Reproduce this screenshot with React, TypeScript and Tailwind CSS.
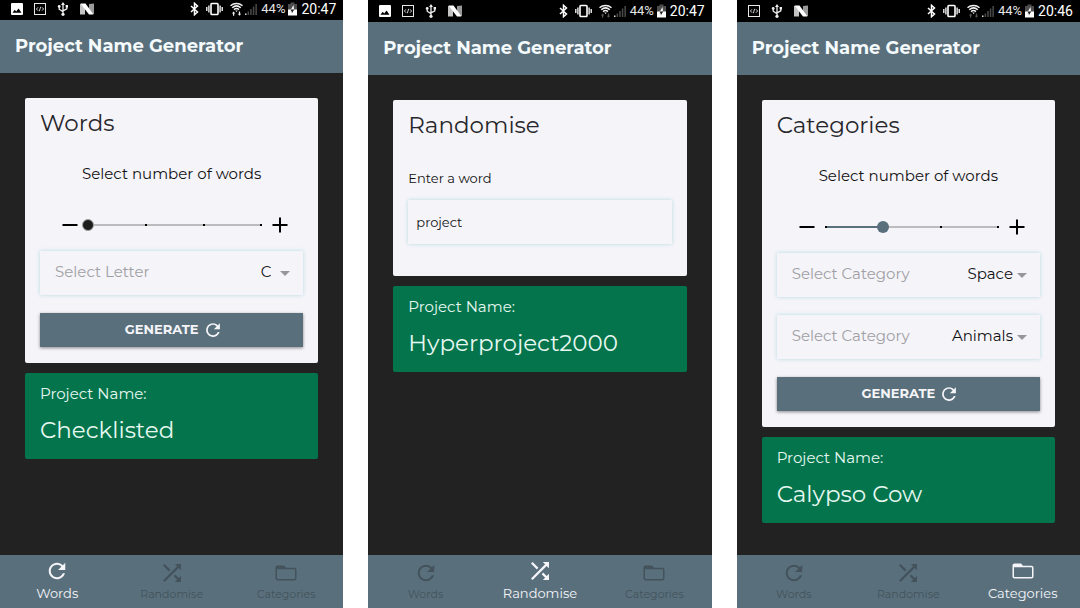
import { useId, useState } from "react";
import type { ReactNode } from "react";
import { IoMdAdd, IoMdFolderOpen, IoMdRefresh, IoMdRemove, IoMdShuffle } from "react-icons/io";
import clsx from "clsx";

type Tab = "Words" | "Randomise" | "Categories";

function ImageIcon() {
  return (
    <svg viewBox="0 0 12 12" className="h-3 w-3" aria-hidden="true">
      <path fill="#fff" fillRule="evenodd" d="M1 0h10a1 1 0 0 1 1 1v10a1 1 0 0 1-1 1H1a1 1 0 0 1-1-1V1a1 1 0 0 1 1-1zM1.500 9.700h9L7.600 5.600 5.200 8.600 3.700 6.800z" />
    </svg>
  );
}

function CodeIcon() {
  return (
    <svg viewBox="0 0 12 12" className="h-3 w-3" fill="none" stroke="#e8e8e8" aria-hidden="true">
      <rect x="0.5" y="0.5" width="11" height="11" />
      <path strokeWidth="0.9" d="M4 4.300 2.400 6 4 7.700M8 4.300 9.600 6 8 7.700M6.700 3.800 5.300 8.200" />
    </svg>
  );
}

function UsbIcon() {
  return (
    <svg viewBox="0 0 12 14" className="h-3.5 w-3" fill="none" stroke="#eee" aria-hidden="true">
      <path strokeWidth="1.3" d="M6 2v10M2.200 5v2.200L6 9.600M9.800 4.800v2L6 8.800" />
      <path fill="#eee" stroke="none" d="M6 0l2 2.900H4zM8.600 3H11v2.400H8.600z" />
      <circle cx="2.200" cy="4.400" r="1.400" fill="#eee" stroke="none" />
      <circle cx="6" cy="12.300" r="1.600" fill="#eee" stroke="none" />
    </svg>
  );
}

function NougatIcon() {
  return (
    <svg viewBox="0 0 14 12" className="h-3 w-3.5" aria-hidden="true">
      <path fill="#c4c4c4" d="M0 1h5v10.500H0z" />
      <path fill="#9a9a9a" d="M9 1l5-.5V11H9z" />
      <path fill="#fff" d="M.5.5H5.500L13.500 11.500H9z" />
    </svg>
  );
}

function BluetoothIcon() {
  return (
    <svg viewBox="0 0 9 14" className="h-3.5 w-[9px]" fill="none" stroke="#fff" strokeWidth="1.500" aria-hidden="true">
      <path d="M1 4l6.500 6L4.500 12.700V1.300L7.500 4 1 10" />
    </svg>
  );
}

function VibrateIcon() {
  return (
    <svg viewBox="0 0 17 14" className="h-3.5 w-[17px]" fill="none" stroke="#fff" aria-hidden="true">
      <rect x="5" y="1.500" width="7" height="11" rx="0.8" strokeWidth="1.600" />
      <path strokeWidth="1.300" d="M2.900 3.500v7M14.100 3.500v7M.8 5v4M16.200 5v4" />
    </svg>
  );
}

function WifiIcon({ active }: { active: boolean }) {
  return (
    <svg viewBox="0 0 13 14" className="h-3.5 w-[13px]" fill="none" stroke="#f2f2f2" aria-hidden="true">
      <path strokeWidth="1.500" d="M.5 3.700C4 .7 9 .7 12.500 3.700M2.200 5.700c2.600-2.200 6-2.200 8.600 0M4 7.600c1.600-1.300 3.400-1.300 5 0" />
      <path fill="#f2f2f2" stroke="none" d="M5.200 8.500h2.600L6.500 10z" />
      <path
        stroke="none"
        fill={active ? "#f2f2f2" : "#555"}
        d="M3.600 9.500 5.300 11.600H4.200V13.800H3V11.600H1.900zM9.500 13.800 7.800 11.700H8.900V9.500H10.100V11.700H11.200z"
      />
    </svg>
  );
}

function SignalIcon() {
  return (
    <svg viewBox="0 0 12 14" className="h-3.5 w-3" aria-hidden="true">
      <path fill="#ddd" d="M0 11.500h1.500V13H0z" />
      <path fill="#4a4a4a" d="M2.600 9.500h1.500V13H2.600zM5.200 7h1.500v6H5.200zM7.800 4.500h1.500V13H7.800zM10.400 2h1.500v11h-1.500z" />
    </svg>
  );
}

function BatteryIcon() {
  return (
    <svg viewBox="0 0 9 14" className="h-3.5 w-[9px]" aria-hidden="true">
      <path fill="#4d4d4d" d="M2.500.5h4V2H9v6H0V2h2.500z" />
      <path fill="#fff" d="M0 7.500h9V13.500H0z" />
      <path fill="#fff" d="M5.500 3 3 7.500h3z" />
      <path fill="#222" d="M3.500 7.500h2.700L3.800 11.500v-2.300H2.600z" />
    </svg>
  );
}

function StatusBar({ time, picture, wifi, tall }: { time: string; picture: boolean; wifi: boolean; tall: boolean }) {
  return (
    <div className={clsx("flex shrink-0 items-center justify-between bg-black pr-[7px] pl-[11px] font-['Roboto',sans-serif] text-white", tall ? "h-[22px]" : "h-5 pb-0.5")}>
      <div className="flex items-center gap-[11px]">
        {picture && <ImageIcon />}
        <CodeIcon />
        <UsbIcon />
        <NougatIcon />
      </div>
      <div className="flex items-center">
        <div className="mr-0.5 flex items-center gap-[7px]">
          <BluetoothIcon />
          <VibrateIcon />
          <WifiIcon active={wifi} />
        </div>
        <SignalIcon />
        <span className="mr-[3px] ml-1 text-[13px] leading-4 text-[#e6e6e6]">44%</span>
        <BatteryIcon />
        <span className="ml-1 text-sm leading-4">{time}</span>
      </div>
    </div>
  );
}

const tabs = [
  { name: "Words", Icon: IoMdRefresh },
  { name: "Randomise", Icon: IoMdShuffle },
  { name: "Categories", Icon: IoMdFolderOpen },
] as const;

function TabBar({ active }: { active: Tab }) {
  return (
    <nav className="grid h-[53px] shrink-0 grid-cols-3 bg-[#59707c]">
      {tabs.map(({ name, Icon }) => {
        const on = name === active;
        return (
          <button
            key={name}
            type="button"
            aria-current={on ? "page" : undefined}
            className={clsx("flex flex-col items-center", on ? "pt-1 text-[13px] leading-5 text-[#f5f4f9]" : "pt-1.5 text-[11px] leading-[18px] text-[#43525b]")}
          >
            <Icon className="size-6" aria-hidden="true" />
            {name}
          </button>
        );
      })}
    </nav>
  );
}

function Slider({ initial }: { initial: number }) {
  const id = useId();
  const [value, setValue] = useState(initial);
  return (
    <>
      <label htmlFor={id} className="mt-6 block text-center text-[15px] leading-6 text-[#111]">
        Select number of words
      </label>
      <div className="mt-6 flex h-[30px] items-center pr-[11px] pl-[18px] text-black">
        <button type="button" aria-label="Fewer words" onClick={() => setValue(Math.max(1, value - 1))}>
          <IoMdRemove className="size-6" />
        </button>
        <div className="relative h-3 min-w-0 flex-1">
          <div className="absolute inset-x-1.5 top-[5px] h-0.5 bg-[#bcbcbf]">
            <div className="h-full bg-[#59707c]" style={{ width: `${((value - 1) / 3) * 100}%` }} />
            <div className="absolute inset-0 flex justify-between">
              {[1, 2, 3, 4].map((n) => (
                <span key={n} className="h-0.5 w-0.5 bg-black" />
              ))}
            </div>
          </div>
          <input
            id={id}
            type="range"
            min={1}
            max={4}
            value={value}
            onChange={(e) => setValue(Number(e.target.value))}
            className={clsx(
              "absolute inset-0 m-0 h-3 w-full appearance-none bg-transparent [&::-webkit-slider-thumb]:size-3 [&::-webkit-slider-thumb]:appearance-none [&::-webkit-slider-thumb]:rounded-full",
              value === 1
                ? "[&::-webkit-slider-thumb]:border [&::-webkit-slider-thumb]:border-[#a0a0a2] [&::-webkit-slider-thumb]:bg-[#1d1d1d]"
                : "[&::-webkit-slider-thumb]:bg-[#59707c]",
            )}
          />
        </div>
        <button type="button" aria-label="More words" onClick={() => setValue(Math.min(4, value + 1))}>
          <IoMdAdd className="size-6" />
        </button>
      </div>
    </>
  );
}

function Picker({ label, options, wide }: { label: string; options: string[]; wide?: boolean }) {
  const id = useId();
  return (
    <div className="flex h-11 items-center pr-[13px] pl-[15px] text-[15px] leading-6 shadow-[0_0_4px_#b4dce0]">
      <label htmlFor={id} className="flex-1 pb-0.5 whitespace-nowrap text-[#a0a0a4]">
        {label}
      </label>
      <select id={id} className={clsx("h-full appearance-none bg-transparent pb-0.5 text-[#111] [text-align-last:right]", wide ? "pr-1" : "pr-[9px]")}>
        {options.map((o) => (
          <option key={o}>{o}</option>
        ))}
      </select>
      <svg viewBox="0 0 10 5" className="h-[5px] w-2.5" aria-hidden="true">
        <path fill="#97979b" d="M0 0h10L5 5z" />
      </svg>
    </div>
  );
}

function GenerateButton() {
  return (
    <button type="button" className="flex h-[34px] w-full items-center justify-center gap-1 bg-[#59707c] pl-1 text-[13px] font-bold text-[#f5f4f9] shadow-[0_1px_3px_rgba(0,0,0,0.45)]">
      GENERATE
      <IoMdRefresh className="size-5" aria-hidden="true" />
    </button>
  );
}

function Screen(props: { tab: Tab; time: string; result: string; picture?: boolean; wifi?: boolean; tall?: boolean; children: ReactNode }) {
  const { tab, time, result, picture = true, wifi = false, tall = true, children } = props;
  return (
    <section className="flex min-h-screen min-w-0 flex-1 flex-col bg-[#222]">
      <StatusBar time={time} picture={picture} wifi={wifi} tall={tall} />
      <header className="flex h-[53px] shrink-0 items-center bg-[#59707c] px-[15px] pb-0.5">
        <h1 className="text-lg leading-6 font-bold whitespace-nowrap text-[#f5fafc]">Project Name Generator</h1>
      </header>
      <main className="flex-1 p-[25px]">
        <div className="rounded-xs bg-[#f5f4f9] px-[15px] pt-2.5 pb-4">
          <h2 className="text-[23px] leading-[30px] text-[#27272b]">{tab}</h2>
          {children}
        </div>
        <div className="mt-2.5 rounded-xs bg-[#04744c] px-[15px] pt-[9px] pb-3.5 text-[#e6f8f0]">
          <p className="text-[15px] leading-6">Project Name:</p>
          <p className="mt-[9px] text-[23px] leading-[30px]">{result}</p>
        </div>
      </main>
      <TabBar active={tab} />
    </section>
  );
}

export default function App() {
  return (
    <div className="flex min-h-screen gap-[25px] bg-white font-['Montserrat','Inter',sans-serif]">
      <Screen tab="Words" time="20:47" result="Checklisted" wifi tall={false}>
        <Slider initial={1} />
        <div className="mt-[11px] flex flex-col gap-[18px]">
          <Picker label="Select Letter" options={["C"]} />
          <GenerateButton />
        </div>
      </Screen>
      <Screen tab="Randomise" time="20:47" result="Hyperproject2000">
        <label htmlFor="word" className="mt-7 block text-[13px] leading-5 text-[#111]">
          Enter a word
        </label>
        <input id="word" type="text" defaultValue="project" className="mt-3 mb-4 block h-11 w-full px-2 text-[13px] text-[#111] shadow-[0_0_4px_#b4dce0]" />
      </Screen>
      <Screen tab="Categories" time="20:46" result="Calypso Cow" picture={false}>
        <Slider initial={2} />
        <div className="mt-[11px] flex flex-col gap-[18px]">
          <Picker label="Select Category" options={["Space"]} wide />
          <Picker label="Select Category" options={["Animals"]} wide />
          <GenerateButton />
        </div>
      </Screen>
    </div>
  );
}
